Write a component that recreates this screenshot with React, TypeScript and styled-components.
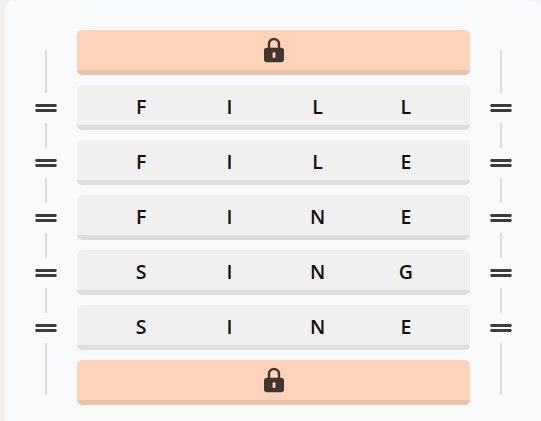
import React from "react";
import styled, { createGlobalStyle } from "styled-components";

const GlobalStyle = createGlobalStyle`
  * { box-sizing: border-box; }
  html, body { margin: 0; overflow: hidden; background: #f4f1ed; }
`;

const Page = styled.main`
  width: 541px;
  height: 421px;
  padding-left: 5px;
  overflow: hidden;
`;

const Card = styled.section`
  display: flex;
  width: 537px;
  height: 440px;
  padding: 30px 30px 0;
  background: #f9fafc;
  border-radius: 10px;
`;

const Rail = styled.div`
  display: flex;
  flex-direction: column;
  align-items: center;
  flex: none;
  width: 22px;
  padding-top: 20px;
`;

const RailLine = styled.span<{ $length: number }>`
  flex: none;
  width: 2px;
  height: ${({ $length }) => $length}px;
  background: #dadbdd;
`;

const Handle = styled.svg`
  display: block;
  flex: none;
  width: 22px;
  height: 30px;
`;

const Ladder = styled.div`
  display: flex;
  flex-direction: column;
  flex: none;
  gap: 10px;
  width: 393px;
  margin: 0 20px;
`;

const Rung = styled.div`
  flex: none;
  height: 45px;
  border-radius: 5px;
  border-bottom: 5px solid #dddddd;
  background: #f0f0f0;
`;

const WordRung = styled(Rung)`
  display: grid;
  grid-template-columns: repeat(4, 1fr);
  padding: 0 20px;
`;

const LockedRung = styled(Rung)`
  display: flex;
  justify-content: center;
  padding-top: 7px;
  padding-left: 1px;
  border-bottom-color: #ebc1ab;
  background: #ffd2ba;
`;

const Letter = styled.span`
  font: 550 19.5px/44px "Open Sans", "Noto Sans", sans-serif;
  text-align: center;
  color: #101010;
`;

const LockIcon = styled.svg`
  display: block;
  width: 20px;
  height: 26px;
`;

const words = ["FILL", "FILE", "FINE", "SING", "SINE"];

function ReorderRail() {
  return (
    <Rail>
      <RailLine $length={43} />
      {words.map((word, i) => (
        <React.Fragment key={word}>
          <Handle viewBox="0 0 22 30" aria-hidden="true">
            <rect x="0.3" y="11.1" width="21.4" height="2.8" rx="1.1" fill="#3c3c3d" />
            <rect x="0.3" y="16.1" width="21.4" height="2.8" rx="1.1" fill="#3c3c3d" />
          </Handle>
          <RailLine $length={i === words.length - 1 ? 52 : 25} />
        </React.Fragment>
      ))}
    </Rail>
  );
}

function Locked() {
  return (
    <LockedRung>
      <LockIcon viewBox="0 0 20 26" aria-label="Locked">
        <path d="M5 12V7a5 5 0 0 1 10 0V12" fill="none" stroke="#40352f" strokeWidth="2.4" />
        <path
          d="M3 10.8h14a3 3 0 0 1 3 3v8.5a3 3 0 0 1-3 3H3a3 3 0 0 1-3-3V13.8a3 3 0 0 1 3-3Z"
          fill="#40352f"
        />
        <rect x="8.6" y="15.3" width="2.8" height="5.6" rx="1" fill="#ffd2ba" />
      </LockIcon>
    </LockedRung>
  );
}

export default function App() {
  return (
    <>
      <GlobalStyle />
      <Page>
        <Card>
          <ReorderRail />
          <Ladder>
            <Locked />
            {words.map((word) => (
              <WordRung key={word}>
                {word.split("").map((letter, i) => (
                  <Letter key={i}>{letter}</Letter>
                ))}
              </WordRung>
            ))}
            <Locked />
          </Ladder>
          <ReorderRail />
        </Card>
      </Page>
    </>
  );
}
